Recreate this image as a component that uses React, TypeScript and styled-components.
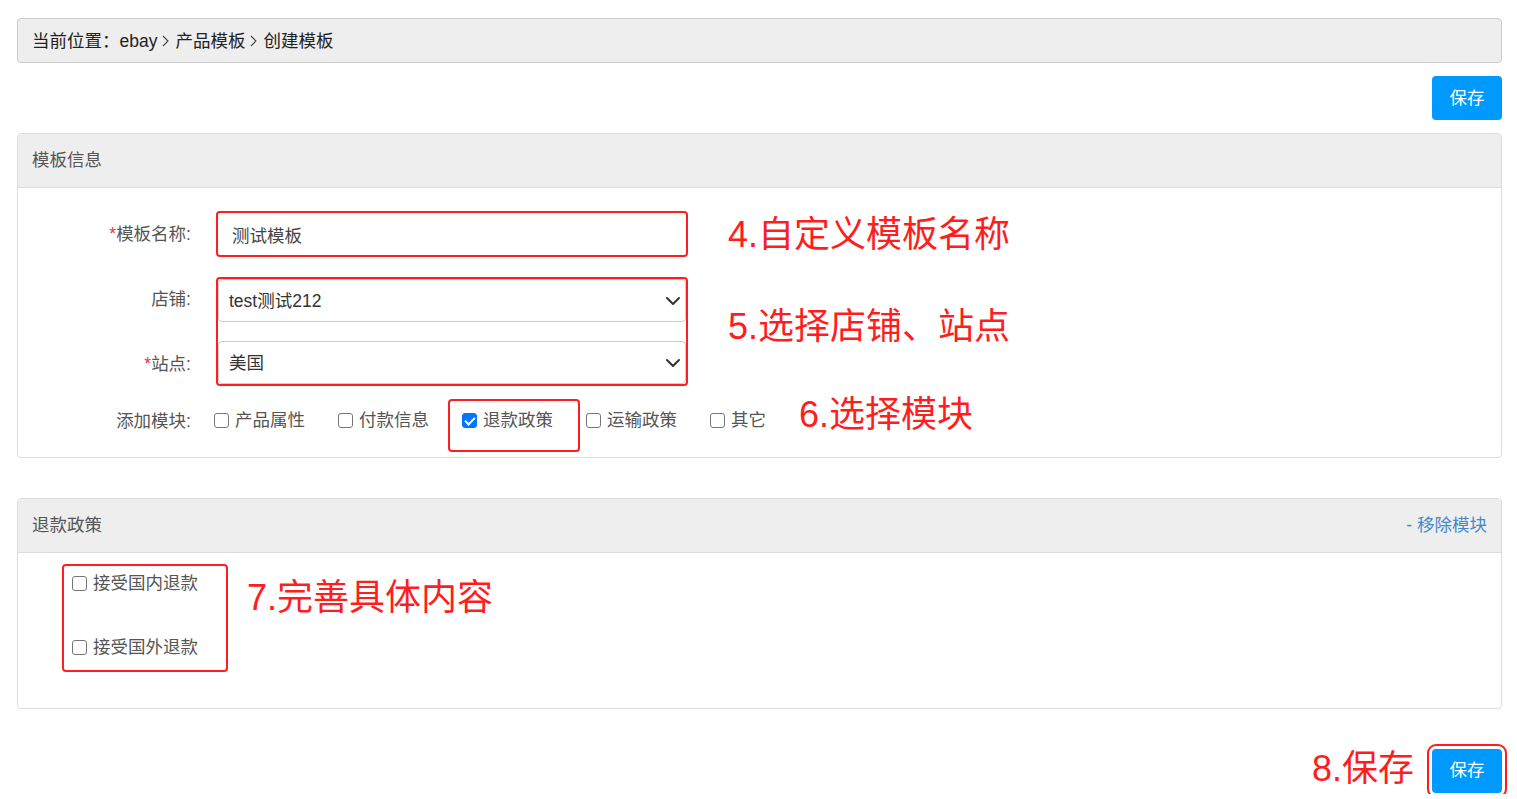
import React from "react";
import styled, { createGlobalStyle } from "styled-components";
import { ChevronDown } from "lucide-react";

const GlobalStyle = createGlobalStyle`
  html, body { margin: 0; padding: 0; background: #fff; }
  body {
    font-family: "Liberation Sans", "Noto Sans CJK SC", sans-serif;
    font-size: 17.5px;
    color: #333;
  }
  * { box-sizing: border-box; }
`;

const RED = "#ff1d1d";

const Page = styled.div`
  padding: 18px 15px 0 17px;
  display: flex;
  flex-direction: column;
`;

const Breadcrumb = styled.div`
  height: 45px;
  border: 1px solid #ccc;
  border-radius: 4px;
  background: #eee;
  display: flex;
  align-items: center;
  padding: 1px 0 0 14px;
  color: #222;
  line-height: 21px;
`;

const Crumb = styled.span``;

const Sep = styled.svg`
  width: 9px;
  height: 12px;
  margin: 0 5px 0 4px;
  flex: none;
`;

const TopBar = styled.div`
  display: flex;
  justify-content: flex-end;
  margin: 13px 0 13px;
`;

const Button = styled.button<{ $marked?: boolean }>`
  width: 70px;
  height: 44px;
  background: #0099ff;
  color: #fff;
  border: none;
  border-radius: 4px;
  font-family: inherit;
  font-size: 17.5px;
  line-height: 21px;
  padding: 0;
  cursor: pointer;
  ${(p) => (p.$marked ? `outline: 2px solid ${RED}; outline-offset: 3px;` : "")}
`;

const Panel = styled.section<{ $gap?: number }>`
  border: 1px solid #ddd;
  border-radius: 4px;
  margin-top: ${(p) => p.$gap ?? 0}px;
`;

const PanelHeader = styled.div`
  height: 54px;
  background: #eee;
  border-bottom: 1px solid #ddd;
  border-radius: 3px 3px 0 0;
  padding: 0 14px;
  display: flex;
  align-items: center;
  justify-content: space-between;
  color: #555;
  line-height: 21px;
`;

const RemoveLink = styled.a`
  color: #428bca;
  text-decoration: none;
  cursor: pointer;
`;

const FormBody = styled.div`
  padding: 23px 0 9px 0;
`;

const FormGrid = styled.div`
  display: grid;
  grid-template-columns: 173px 472px 1fr;
  grid-template-rows: 46px 20px 64px 45px auto;
  column-gap: 25px;
`;

const Label = styled.label<{ $row: string; $align?: string; $pad?: string }>`
  grid-column: 1;
  grid-row: ${(p) => p.$row};
  align-self: ${(p) => p.$align ?? "center"};
  text-align: right;
  color: #555;
  line-height: 21px;
  padding: ${(p) => p.$pad ?? "0"};
`;

const Star = styled.span`
  color: #e4393c;
`;

const NameInput = styled.input`
  grid-column: 2;
  grid-row: 1;
  height: 46px;
  width: 100%;
  border: 2px solid ${RED};
  border-radius: 4px;
  padding: 0 14px;
  font-family: inherit;
  font-size: 17.5px;
  color: #444;
  outline: none;
`;

const SelectGroup = styled.div`
  grid-column: 2;
  grid-row: 3 / span 2;
  border: 2px solid ${RED};
  border-radius: 4px;
  display: flex;
  flex-direction: column;
  justify-content: space-between;
`;

const SelectWrap = styled.div`
  position: relative;
  height: 43px;
`;

const Select = styled.select`
  appearance: none;
  width: 100%;
  height: 100%;
  border: 1px solid #ccc;
  border-radius: 4px;
  padding: 0 10px;
  background: #fff;
  font-family: inherit;
  font-size: 17.5px;
  color: #333;
  outline: none;
`;

const Chevron = styled(ChevronDown)`
  position: absolute;
  right: 1px;
  top: 50%;
  transform: translateY(-50%);
  pointer-events: none;
  color: #333;
`;

const Note = styled.div<{ $row?: string; $col?: string; $shift?: string; $self?: string }>`
  grid-column: ${(p) => p.$col ?? "3"};
  grid-row: ${(p) => p.$row ?? "auto"};
  align-self: ${(p) => p.$self ?? "center"};
  margin: ${(p) => p.$shift ?? "0 0 0 15px"};
  color: ${RED};
  font-size: 36px;
  line-height: 43px;
  white-space: nowrap;
`;

const ModuleRow = styled.div`
  grid-column: 2 / -1;
  grid-row: 5;
  display: flex;
  align-items: flex-start;
  height: 49px;
  margin-top: 13px;
  margin-left: -2px;
  padding-top: 11px;
`;

const CheckItem = styled.label<{ $w?: string; $mark?: boolean }>`
  position: relative;
  display: inline-flex;
  align-items: center;
  gap: 6px;
  width: ${(p) => p.$w ?? "124px"};
  flex: none;
  color: #555;
  line-height: 21px;
  white-space: nowrap;
  ${(p) =>
    p.$mark
      ? `&::after {
      content: "";
      position: absolute;
      left: -14px;
      top: -11px;
      width: 128px;
      height: 49px;
      border: 2px solid ${RED};
      border-radius: 4px;
      pointer-events: none;
    }`
      : ""}
`;

const Box = styled.input`
  appearance: none;
  position: relative;
  width: 15px;
  height: 15px;
  margin: 0;
  flex: none;
  border: 1px solid #767676;
  border-radius: 3px;
  background: #fff;
  &:checked {
    background: #0075ff;
    border-color: #0075ff;
  }
  &:checked::after {
    content: "";
    position: absolute;
    left: 4px;
    top: 1px;
    width: 4px;
    height: 8px;
    border: solid #fff;
    border-width: 0 2px 2px 0;
    transform: rotate(45deg);
  }
`;

const RefundBody = styled.div`
  padding: 11px 0 36px 44px;
  display: flex;
  align-items: flex-start;
`;

const CheckList = styled.div`
  width: 166px;
  border: 2px solid ${RED};
  border-radius: 4px;
  padding: 7px 8px 12px 8px;
  display: flex;
  flex-direction: column;
  gap: 43px;
`;

const BottomBar = styled.div`
  display: flex;
  justify-content: flex-end;
  align-items: center;
  gap: 18px;
  margin-top: 38px;
`;

const Sepr = () => (
  <Sep viewBox="0 0 9 12">
    <polyline points="2,1 7,6 2,11" fill="none" stroke="#444" strokeWidth="1.1" />
  </Sep>
);

export default function App() {
  return (
    <>
      <GlobalStyle />
      <Page>
        <Breadcrumb>
          <Crumb>当前位置：ebay</Crumb>
          <Sepr />
          <Crumb>产品模板</Crumb>
          <Sepr />
          <Crumb>创建模板</Crumb>
        </Breadcrumb>

        <TopBar>
          <Button>保存</Button>
        </TopBar>

        <Panel>
          <PanelHeader>模板信息</PanelHeader>
          <FormBody>
            <FormGrid>
              <Label $row="1">
                <Star>*</Star>模板名称:
              </Label>
              <NameInput defaultValue="测试模板" />
              <Note $row="1">4.自定义模板名称</Note>

              <Label $row="3" $align="start" $pad="12px 0 0 0">
                店铺:
              </Label>
              <SelectGroup>
                <SelectWrap>
                  <Select defaultValue="test测试212">
                    <option>test测试212</option>
                  </Select>
                  <Chevron size={24} strokeWidth={2} />
                </SelectWrap>
                <SelectWrap>
                  <Select defaultValue="美国">
                    <option>美国</option>
                  </Select>
                  <Chevron size={24} strokeWidth={2} />
                </SelectWrap>
              </SelectGroup>
              <Label $row="4" $align="end" $pad="0 0 11px 0">
                <Star>*</Star>站点:
              </Label>
              <Note $row="3 / span 2" $shift="0 0 11px 15px">
                5.选择店铺、站点
              </Note>

              <Label $row="5" $align="start" $pad="25px 0 0 0">
                添加模块:
              </Label>
              <ModuleRow>
                <CheckItem>
                  <Box type="checkbox" />
                  产品属性
                </CheckItem>
                <CheckItem>
                  <Box type="checkbox" />
                  付款信息
                </CheckItem>
                <CheckItem $mark>
                  <Box type="checkbox" defaultChecked />
                  退款政策
                </CheckItem>
                <CheckItem>
                  <Box type="checkbox" />
                  运输政策
                </CheckItem>
                <CheckItem $w="auto">
                  <Box type="checkbox" />
                  其它
                </CheckItem>
                <Note $col="auto" $self="flex-start" $shift="-17px 0 0 33px">
                  6.选择模块
                </Note>
              </ModuleRow>
            </FormGrid>
          </FormBody>
        </Panel>

        <Panel $gap={40}>
          <PanelHeader>
            退款政策
            <RemoveLink>- 移除模块</RemoveLink>
          </PanelHeader>
          <RefundBody>
            <CheckList>
              <CheckItem $w="auto">
                <Box type="checkbox" />
                接受国内退款
              </CheckItem>
              <CheckItem $w="auto">
                <Box type="checkbox" />
                接受国外退款
              </CheckItem>
            </CheckList>
            <Note $col="auto" $self="flex-start" $shift="12px 0 0 19px">
              7.完善具体内容
            </Note>
          </RefundBody>
        </Panel>

        <BottomBar>
          <Note $col="auto" $shift="0 0 4px 0">
            8.保存
          </Note>
          <Button $marked>保存</Button>
        </BottomBar>
      </Page>
    </>
  );
}
